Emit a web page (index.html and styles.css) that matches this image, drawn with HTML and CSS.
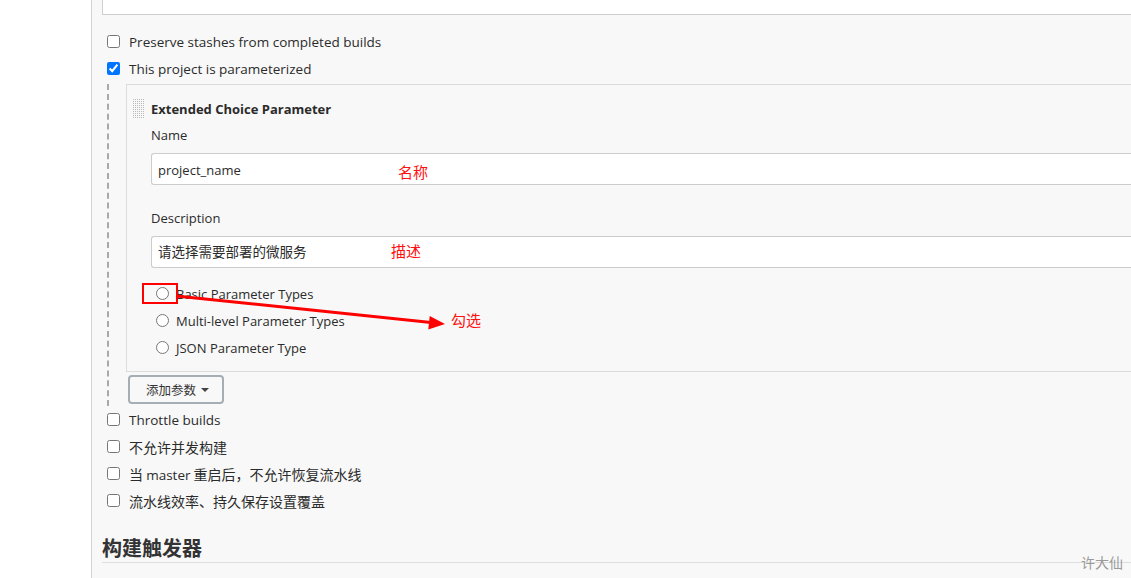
FILE: index.html
```html
<!DOCTYPE html>
<html lang="zh-CN">
<head>
<meta charset="utf-8">
<title>Jenkins 配置</title>
<link rel="stylesheet" href="styles.css">
</head>
<body>
<div class="page">
  <div class="sidebar"></div>
  <div class="main">
    <div class="textarea-tail"></div>

    <label class="opt first"><input type="checkbox"><span>Preserve stashes from completed builds</span></label>
    <label class="opt"><input type="checkbox" checked><span>This project is parameterized</span></label>

    <div class="params">
      <div class="param-box">
        <div class="param-head">
          <div class="handle"></div>
          <div class="param-title">Extended Choice Parameter</div>
        </div>
        <div class="param-body">
          <div class="field-label">Name</div>
          <div class="input">project_name</div>
          <div class="field-label second">Description</div>
          <div class="input input-cjk"><span class="cjk">请选择需要部署的微服务</span></div>
          <div class="radios">
            <label class="radio"><input type="radio" name="ptype"><span>Basic Parameter Types</span></label>
            <label class="radio"><input type="radio" name="ptype"><span>Multi-level Parameter Types</span></label>
            <label class="radio"><input type="radio" name="ptype"><span>JSON Parameter Type</span></label>
          </div>
        </div>
      </div>
      <button class="add-btn" type="button"><span class="cjk">添加参数</span><i class="caret"></i></button>
    </div>

    <label class="opt"><input type="checkbox"><span>Throttle builds</span></label>
    <label class="opt"><input type="checkbox"><span class="cjk">不允许并发构建</span></label>
    <label class="opt"><input type="checkbox"><span class="cjk">当 <span class="latin">master</span> 重启后，不允许恢复流水线</span></label>
    <label class="opt"><input type="checkbox"><span class="cjk">流水线效率、持久保存设置覆盖</span></label>

    <h2 class="section-title">构建触发器</h2>
  </div>
</div>

<div class="note note-name">名称</div>
<div class="note note-desc">描述</div>
<div class="note note-check">勾选</div>
<svg class="annot" width="1131" height="578" viewBox="0 0 1131 578" xmlns="http://www.w3.org/2000/svg">
  <rect x="143" y="284" width="34" height="19" fill="none" stroke="#ff0000" stroke-width="2"/>
  <line x1="176" y1="296" x2="431" y2="322.5" stroke="#ff0000" stroke-width="3"/>
  <polygon points="445,324 429.7,316 428.3,329.5" fill="#ff0000"/>
</svg>
<div class="watermark">许大仙</div>
</body>
</html>
```

FILE: styles.css
```css
html, body {
  margin: 0;
  padding: 0;
}
body {
  width: 1131px;
  height: 578px;
  overflow: hidden;
  position: relative;
  background: #ffffff;
  font-family: "Open Sans", "Noto Sans", "Noto Sans CJK SC", sans-serif;
  font-size: 13px;
  color: #2b2b2b;
}
.page {
  display: flex;
  width: 1131px;
  height: 578px;
}
.sidebar {
  flex: 0 0 91px;
  background: #ffffff;
}
.main {
  flex: 1 1 auto;
  min-width: 0;
  background: #f8f8f8;
  border-left: 1px solid #d4d4d4;
  padding-left: 10px;
  display: flex;
  flex-direction: column;
  align-items: flex-start;
}
.cjk {
  font-family: "Noto Sans CJK SC", sans-serif;
  font-size: 13.5px;
}
.textarea-tail {
  align-self: stretch;
  height: 14px;
  background: #ffffff;
  border-left: 1px solid #cfcfcf;
  border-bottom: 1px solid #cfcfcf;
}
.opt {
  display: flex;
  align-items: center;
  height: 27px;
  padding-left: 5px;
  font-size: 13.5px;
}
.opt .cjk {
  font-size: 14px;
}
.opt .latin {
  font-family: "Open Sans", "Noto Sans", sans-serif;
  font-size: 13.5px;
}
.opt.first {
  margin-top: 13px;
}
.opt input, .radio input {
  width: 13px;
  height: 13px;
  margin: 0;
  flex: 0 0 13px;
}
.opt > span {
  margin-left: 9px;
}
.params {
  align-self: stretch;
  margin-top: 2px;
  margin-left: 5px;
  border-left: 2px dashed #a9a9a9;
  padding-left: 17px;
  padding-bottom: 2px;
  display: flex;
  flex-direction: column;
  align-items: flex-start;
}
.param-box {
  align-self: stretch;
  border-top: 1px solid #dcdcdc;
  border-left: 1px solid #dcdcdc;
  border-bottom: 1px solid #dcdcdc;
  background: #f8f8f8;
  padding: 14px 0 10px 5px;
}
.param-head {
  display: flex;
  align-items: center;
  height: 20px;
}
.handle {
  width: 12px;
  height: 20px;
  background: conic-gradient(#b9b9b9 25%, transparent 0) 0 0 / 2px 2px;
}
.param-title {
  margin-left: 7px;
  font-weight: 700;
}
.param-body {
  padding-left: 19px;
  display: flex;
  flex-direction: column;
}
.field-label {
  height: 20px;
  line-height: 20px;
  margin-top: 6px;
  margin-bottom: 8px;
}
.field-label.second {
  margin-top: 23px;
}
.input {
  height: 30px;
  line-height: 32px;
  background: #ffffff;
  border-top: 1px solid #cccccc;
  border-left: 1px solid #cccccc;
  border-bottom: 1px solid #cccccc;
  border-radius: 3px 0 0 3px;
  padding-left: 6px;
}
.input-cjk {
  line-height: 29px;
}
.radios {
  margin-top: 12px;
  padding-left: 5px;
  display: flex;
  flex-direction: column;
}
.radio {
  display: flex;
  align-items: center;
  height: 27px;
}
.radio span {
  margin-left: 7px;
}
.add-btn {
  margin-top: 3px;
  margin-left: 2px;
  width: 96px;
  height: 29px;
  border: 2px solid #a6adb4;
  border-radius: 4px;
  background: #f8f8f8;
  color: #333333;
  display: flex;
  align-items: center;
  padding: 0 0 0 16px;
  font: inherit;
}
.add-btn .cjk {
  font-size: 12.5px;
}
.caret {
  margin-left: 5px;
  width: 0;
  height: 0;
  border-left: 4px solid transparent;
  border-right: 4px solid transparent;
  border-top: 4px solid #444444;
}
.section-title {
  margin: 20px 0 0 0;
  align-self: stretch;
  height: 28px;
  line-height: 28px;
  font-family: "Noto Sans CJK SC", sans-serif;
  font-size: 20px;
  font-weight: 700;
  color: #333333;
  border-bottom: 1px solid #dddddd;
}
.note {
  position: absolute;
  font-family: "Noto Sans CJK SC", sans-serif;
  font-size: 15px;
  line-height: 20px;
  color: #ff1010;
}
.note-name { left: 398px; top: 162px; }
.note-desc { left: 391px; top: 241px; }
.note-check { left: 451px; top: 310px; }
.annot {
  position: absolute;
  left: 0;
  top: 0;
  pointer-events: none;
}
.watermark {
  position: absolute;
  left: 1081px;
  top: 552px;
  font-family: "Noto Sans CJK SC", sans-serif;
  font-size: 14px;
  line-height: 20px;
  color: #9a9a9a;
}
```
